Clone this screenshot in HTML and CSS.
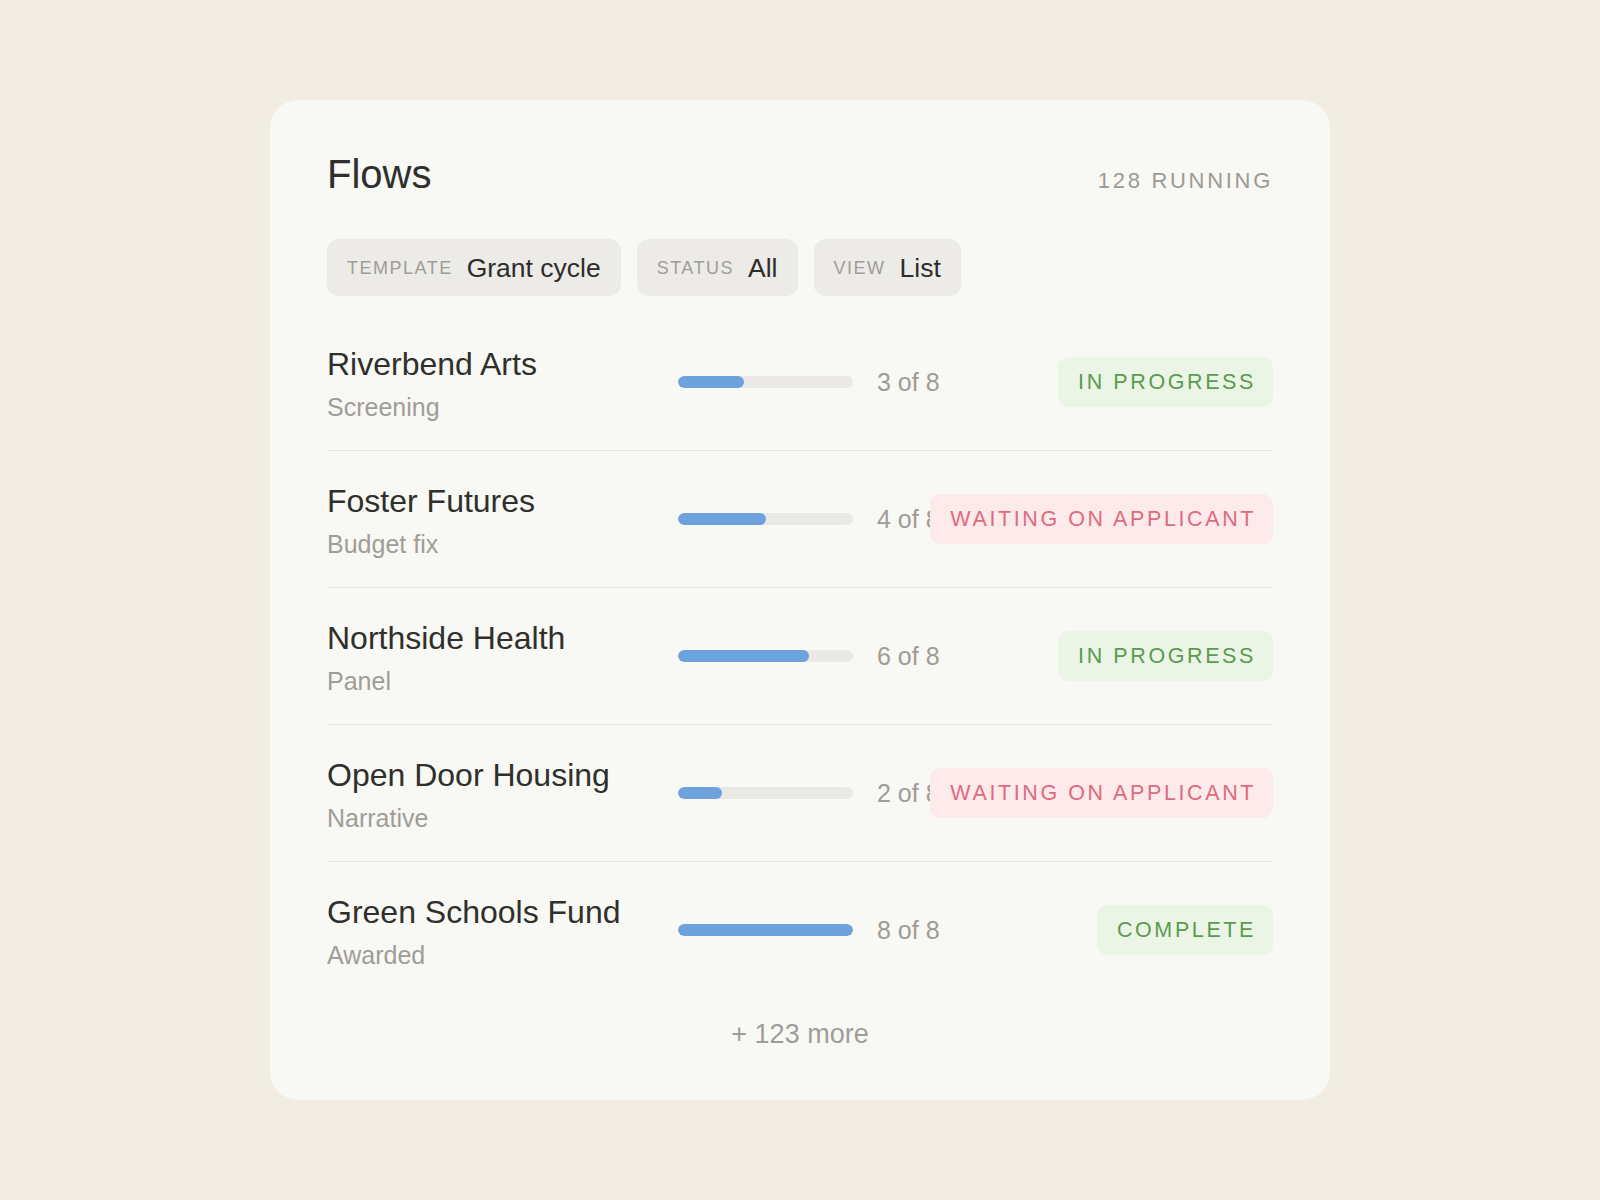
FILE: index.html
```html
<!DOCTYPE html>
<html lang="en">
<head>
<meta charset="utf-8">
<title>Flows</title>
<link rel="stylesheet" href="styles.css">
</head>
<body>
<main class="card">
  <header class="card-head">
    <h1 class="title">Flows</h1>
    <span class="running">128 RUNNING</span>
  </header>

  <div class="filters">
    <div class="chip"><span class="chip-label">TEMPLATE</span><span class="chip-value">Grant cycle</span></div>
    <div class="chip"><span class="chip-label">STATUS</span><span class="chip-value">All</span></div>
    <div class="chip"><span class="chip-label">VIEW</span><span class="chip-value">List</span></div>
  </div>

  <ul class="flows">
    <li class="flow">
      <div class="flow-name"><div class="name">Riverbend Arts</div><div class="stage">Screening</div></div>
      <div class="bar"><div class="fill" style="width: 37.5%"></div></div>
      <div class="count">3 of 8</div>
      <div class="status"><span class="badge badge-green">IN PROGRESS</span></div>
    </li>
    <li class="flow">
      <div class="flow-name"><div class="name">Foster Futures</div><div class="stage">Budget fix</div></div>
      <div class="bar"><div class="fill" style="width: 50%"></div></div>
      <div class="count">4 of 8</div>
      <div class="status"><span class="badge badge-red">WAITING ON APPLICANT</span></div>
    </li>
    <li class="flow">
      <div class="flow-name"><div class="name">Northside Health</div><div class="stage">Panel</div></div>
      <div class="bar"><div class="fill" style="width: 75%"></div></div>
      <div class="count">6 of 8</div>
      <div class="status"><span class="badge badge-green">IN PROGRESS</span></div>
    </li>
    <li class="flow">
      <div class="flow-name"><div class="name">Open Door Housing</div><div class="stage">Narrative</div></div>
      <div class="bar"><div class="fill" style="width: 25%"></div></div>
      <div class="count">2 of 8</div>
      <div class="status"><span class="badge badge-red">WAITING ON APPLICANT</span></div>
    </li>
    <li class="flow">
      <div class="flow-name"><div class="name">Green Schools Fund</div><div class="stage">Awarded</div></div>
      <div class="bar"><div class="fill" style="width: 100%"></div></div>
      <div class="count">8 of 8</div>
      <div class="status"><span class="badge badge-green">COMPLETE</span></div>
    </li>
  </ul>

  <div class="more">+ 123 more</div>
</main>
</body>
</html>
```

FILE: styles.css
```css
* {
  box-sizing: border-box;
}

html, body {
  margin: 0;
  padding: 0;
}

body {
  background: #f1ede2;
  font-family: "Liberation Sans", Arial, sans-serif;
  color: #2f2f2c;
  padding: 100px 0;
}

.card {
  display: block;
  width: 1060px;
  height: 1000px;
  margin: 0 auto;
  background: #f8f8f4;
  border-radius: 28px;
  padding: 54px 57px 51px 57px;
}

.card-head {
  display: flex;
  justify-content: space-between;
  align-items: baseline;
}

.title {
  margin: 0;
  font-size: 40px;
  line-height: 40px;
  font-weight: 400;
  color: #2f2f2c;
}

.running {
  font-size: 22px;
  line-height: 22px;
  letter-spacing: 2.7px;
  color: #9d9a94;
}

.filters {
  display: flex;
  gap: 16px;
  margin-top: 45px;
}

.chip {
  display: flex;
  align-items: center;
  gap: 14px;
  height: 57px;
  padding: 0 20px;
  background: #ecebe7;
  border-radius: 12px;
}

.chip-label {
  font-size: 18px;
  line-height: 18px;
  letter-spacing: 1.5px;
  color: #a09d97;
}

.chip-value {
  font-size: 26.5px;
  line-height: 26px;
  color: #2e2d2a;
}

.flows {
  list-style: none;
  margin: 18px 0 0 0;
  padding: 0;
}

.flow {
  display: flex;
  align-items: center;
  padding: 28px 0;
  border-bottom: 1px solid #e6e4df;
}

.flow:last-child {
  border-bottom: none;
}

.flow-name {
  flex: none;
  width: 351px;
}

.name {
  font-size: 32px;
  line-height: 44px;
  color: #2f2f2c;
  white-space: nowrap;
}

.stage {
  margin-top: 6px;
  font-size: 25px;
  line-height: 30px;
  color: #a09d97;
}

.bar {
  flex: none;
  width: 175px;
  height: 12px;
  border-radius: 6px;
  background: #ebe9e5;
  overflow: hidden;
}

.fill {
  height: 100%;
  border-radius: 6px;
  background: #6ea2dd;
}

.count {
  flex: none;
  margin-left: 24px;
  font-size: 25px;
  line-height: 30px;
  color: #9f9c96;
  white-space: nowrap;
}

.status {
  flex: 1 1 auto;
  min-width: 0;
  display: flex;
  justify-content: flex-end;
}

.badge {
  flex: none;
  position: relative;
  height: 50px;
  padding: 0 17px 0 20px;
  border-radius: 10px;
  font-size: 21.5px;
  line-height: 50px;
  letter-spacing: 2.6px;
  white-space: nowrap;
}

.badge-green {
  background: #ebf5e6;
  color: #5b9a50;
}

.badge-red {
  background: #fdeaea;
  color: #df6b7e;
}

.more {
  margin-top: 23px;
  text-align: center;
  font-size: 27px;
  line-height: 27px;
  color: #a09d97;
}
```
